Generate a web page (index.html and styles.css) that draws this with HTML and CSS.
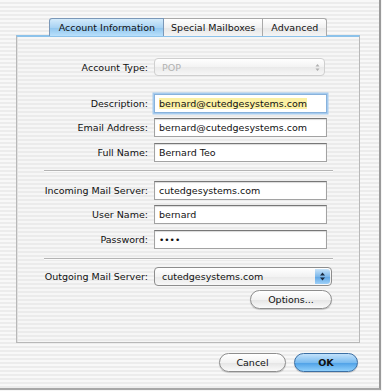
FILE: index.html
```html
<!DOCTYPE html>
<html lang="en">
<head>
    <meta charset="UTF-8">
    <meta name="viewport" content="width=device-width, initial-scale=1.0">
    <title>Account Information</title>
    <link rel="stylesheet" href="styles.css">
</head>
<body>
    <div class="window">
        <div class="tabview">
            <div class="tabs">
                <div class="tab active">Account Information</div>
                <div class="tab">Special Mailboxes</div>
                <div class="tab">Advanced</div>
            </div>

            <div class="panel">
                <div class="form">
                    <label>Account Type:</label>
                    <div class="popup disabled">
                        <span>POP</span>
                        <span class="arrows">
                            <svg width="7" height="11" viewBox="0 0 7 11"><path d="M3.5 2 L5.5 4.5 H1.5 Z M3.5 9 L5.5 6.5 H1.5 Z" fill="#b0b0b0"/></svg>
                        </span>
                    </div>

                    <div class="spacer"></div>

                    <label>Description:</label>
                    <div class="field focused"><span class="selected">bernard@cutedgesystems.com</span></div>

                    <label>Email Address:</label>
                    <div class="field">bernard@cutedgesystems.com</div>

                    <label>Full Name:</label>
                    <div class="field">Bernard Teo</div>

                    <hr class="separator">

                    <label>Incoming Mail Server:</label>
                    <div class="field">cutedgesystems.com</div>

                    <label>User Name:</label>
                    <div class="field">bernard</div>

                    <label>Password:</label>
                    <div class="field dots">&bull;&bull;&bull;&bull;</div>

                    <hr class="separator last">

                    <label>Outgoing Mail Server:</label>
                    <div class="popup wide">
                        <span>cutedgesystems.com</span>
                        <span class="arrows blue">
                            <svg width="7" height="11" viewBox="0 0 7 11"><path d="M3.5 1.5 L6 4.5 H1 Z M3.5 9.5 L6 6.5 H1 Z" fill="#1a2a40"/></svg>
                        </span>
                    </div>

                    <div class="options-row">
                        <button class="button">Options...</button>
                    </div>
                </div>
            </div>
        </div>

        <div class="actions">
            <button class="button">Cancel</button>
            <button class="button default">OK</button>
        </div>
    </div>
</body>
</html>
```

FILE: styles.css
```css
body {
    margin: 0;
    width: 382px;
    height: 391px;
    overflow: hidden;
    background: #f6f6f6;
    font-family: 'DejaVu Sans', 'Liberation Sans', sans-serif;
    font-size: 9.5px;
    color: #111;
}

.window {
    width: 381px;
    height: 390px;
    border-right: 2px solid #9a9a9a;
    border-bottom: 2px solid #a8a8a8;
    background: repeating-linear-gradient(180deg, #f8f8f8 0 2px, #ececec 2px 4px);
    padding-top: 18px;
    box-sizing: border-box;
}

.tabview {
    margin-left: 16px;
    width: 344px;
}

.tabs {
    display: flex;
    justify-content: center;
    position: relative;
    z-index: 1;
    margin-bottom: -1px;
}

.tab {
    height: 17px;
    line-height: 17px;
    padding: 0 7px;
    border: 1px solid #a9a9a9;
    border-bottom: none;
    border-left: none;
    background: linear-gradient(#ffffff, #f1f1f1 50%, #e6e6e6 51%, #f4f4f4);
    color: #111;
}

.tab:last-child {
    padding: 0 8px;
    border-radius: 0 3px 0 0;
}

.tab.active {
    background: linear-gradient(#d4ebfb, #a9d3f3 50%, #8fc5ee 51%, #b9e0fb);
    border-color: #7b98b8;
    border-left: 1px solid #7b98b8;
    border-radius: 3px 0 0 0;
    padding: 0 8px 0 9px;
}

.panel {
    height: 308px;
    border: 1px solid #b8b8b8;
    border-top: 2px solid #8cc2ea;
    box-shadow: inset 1px 0 0 #e2e2e2;
    background: repeating-linear-gradient(180deg, #f6f6f6 0 2px, #ebebeb 2px 4px);
    padding-top: 21px;
    box-sizing: border-box;
}

.form {
    display: grid;
    grid-template-columns: 131px 173px;
    column-gap: 6px;
    row-gap: 5.5px;
    align-items: center;
}

label {
    text-align: right;
    color: #111;
}

.field {
    height: 19px;
    line-height: 18px;
    padding: 0 4px;
    border: 1px solid #a2a2a2;
    border-top-color: #777;
    box-shadow: inset 0 1px 1px rgba(0,0,0,0.15);
    background: #fff;
    box-sizing: border-box;
    white-space: nowrap;
    overflow: hidden;
}

.field.focused {
    border-color: #88b2dc;
    box-shadow: 0 0 0 1.5px #a6cbee;
}

.selected {
    background: #fbf0a3;
}

.dots {
    font-size: 9px;
}

.popup {
    height: 18px;
    border: 1px solid #a4a4a4;
    border-radius: 4px;
    background: linear-gradient(#ffffff, #f3f3f3 50%, #e9e9e9 51%, #f7f7f7);
    display: flex;
    align-items: center;
    justify-content: space-between;
    padding-left: 7px;
    box-sizing: border-box;
    width: 171px;
}

.popup.disabled {
    color: #b2b2b2;
    border-color: #cfcfcf;
}

.popup.wide {
    width: 178px;
    height: 19px;
    border-color: #8d8d8d;
}

.arrows {
    width: 14px;
    display: flex;
    justify-content: center;
}

.arrows.blue {
    align-self: stretch;
    width: 15px;
    margin: 1px;
    border-radius: 0 3px 3px 0;
    background: linear-gradient(#c8e4fa, #7db8ea 50%, #5da5e4 51%, #9ed0f8);
    align-items: center;
}

.spacer {
    grid-column: 1 / -1;
    height: 6.5px;
}

.separator {
    grid-column: 1 / -1;
    width: 289px;
    margin: 3px 0 3px 27px;
    border: none;
    border-top: 1px solid #b4b4b4;
    border-bottom: 1px solid #fafafa;
    height: 0;
}

.separator.last {
    margin: 3.5px 0 1.5px 27px;
}

.options-row {
    grid-column: 2;
    display: flex;
    justify-content: flex-end;
    margin-right: -5px;
    margin-top: -1px;
}

.button {
    font-family: inherit;
    font-size: 9.5px;
    color: #111;
    height: 19px;
    border: 1px solid #8e8e8e;
    border-radius: 10px;
    background: linear-gradient(#ffffff, #f2f2f2 50%, #e4e4e4 51%, #fafafa);
    box-shadow: 0 1px 1px rgba(0,0,0,0.2);
    padding: 0;
    width: 82px;
}

.actions {
    display: flex;
    justify-content: flex-end;
    gap: 8px;
    margin-top: 10px;
    margin-right: 21px;
}

.actions .button {
    width: 67px;
}

.actions .button.default {
    width: 64px;
    border-color: #3b6fa4;
    background: linear-gradient(#c3e2fb, #7bbcf0 50%, #4c9fe6 51%, #8fd0fc);
    font-weight: bold;
}
```
